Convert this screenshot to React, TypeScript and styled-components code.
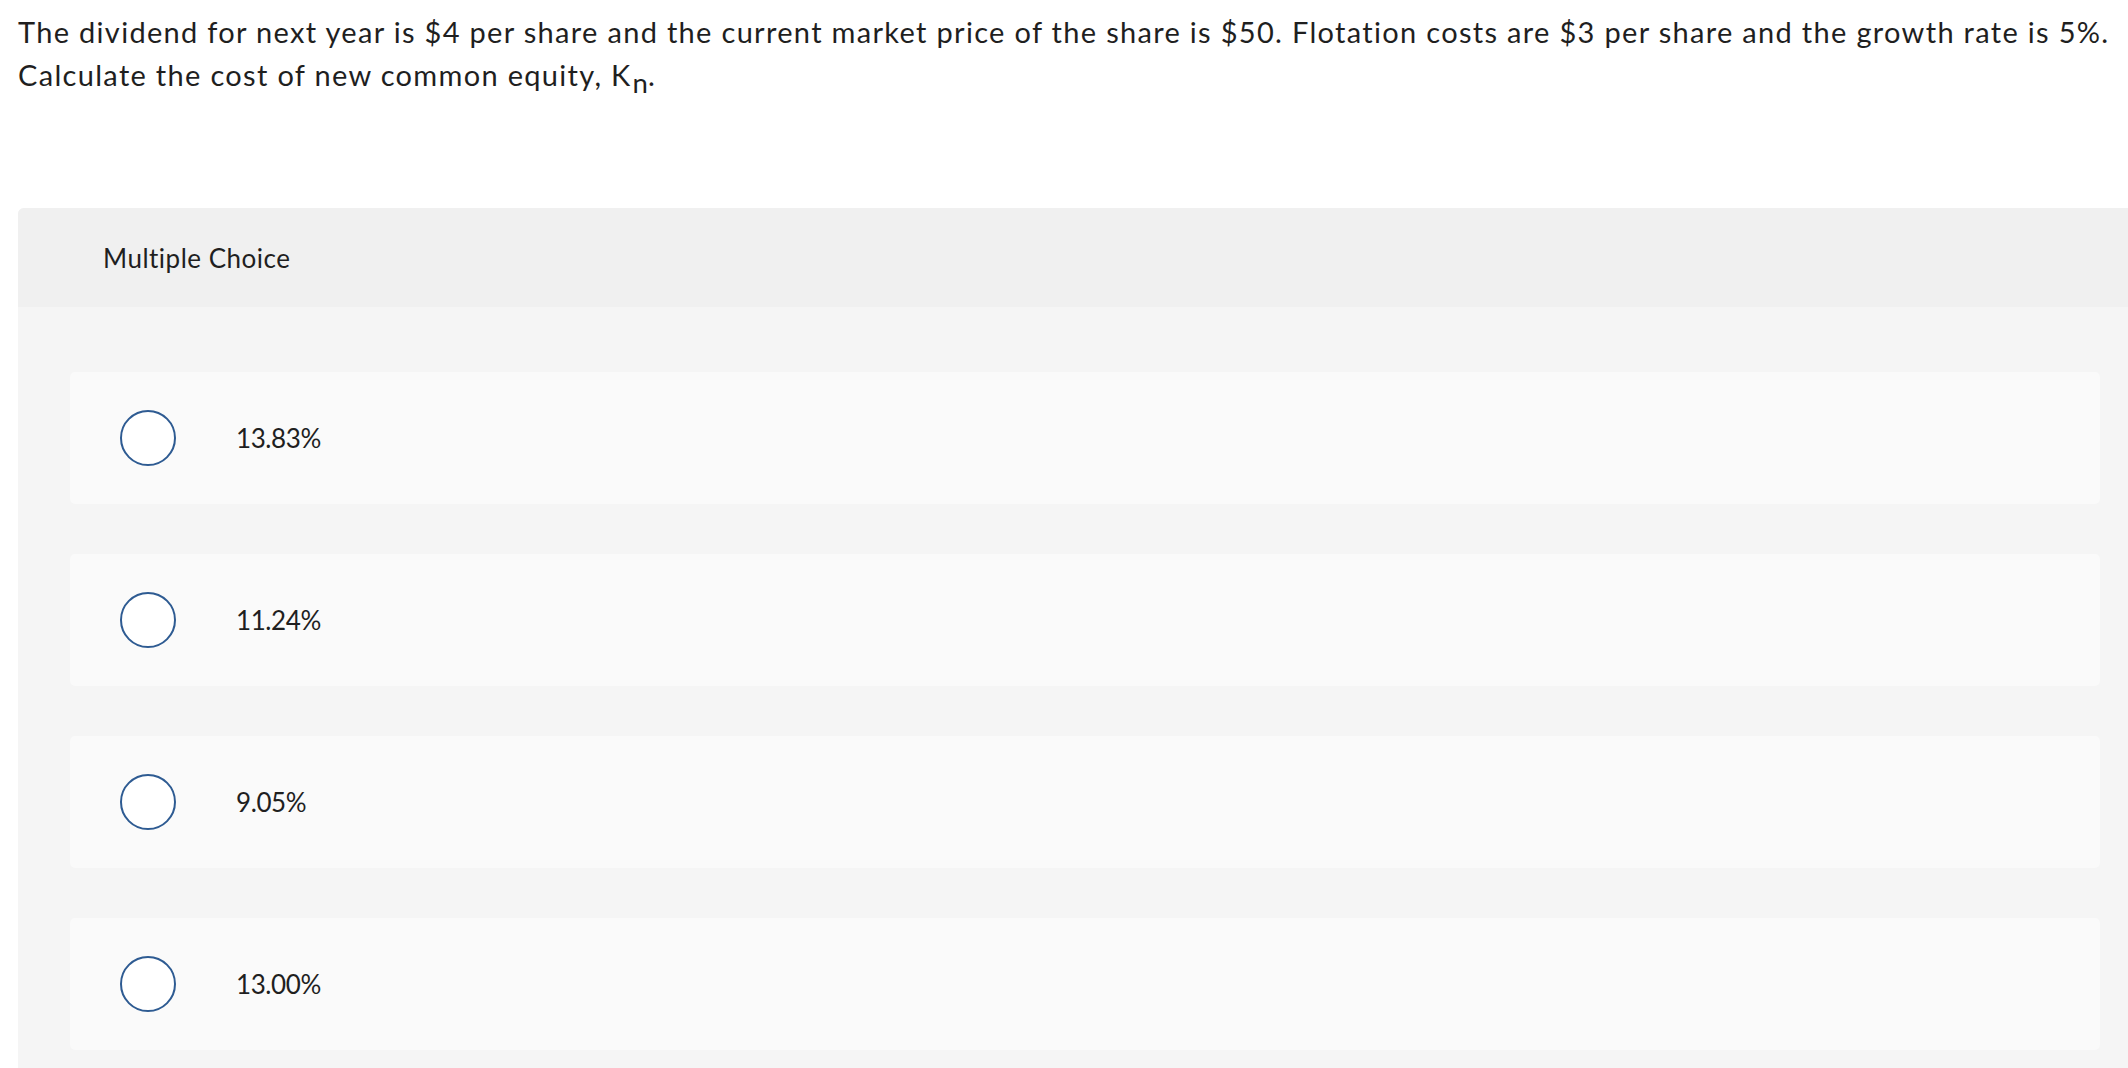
import React from "react";
import styled, { createGlobalStyle } from "styled-components";

const GlobalStyle = createGlobalStyle`
  html, body {
    margin: 0;
    padding: 0;
    background: #ffffff;
    overflow: hidden;
  }
  body {
    font-family: "Lato", "Liberation Sans", sans-serif;
    color: #212121;
  }
`;

const Page = styled.div`
  display: flex;
  flex-direction: column;
  padding-top: 10px;
`;

const Question = styled.p`
  margin: 0 0 112px 0;
  padding: 0 18px;
  font-size: 29px;
  line-height: 43px;
  letter-spacing: 1.31px;
  color: #1f1f1f;
`;

const Sub = styled.sub`
  font-size: 0.95em;
  line-height: 0;
  vertical-align: -7px;
  letter-spacing: 0;
  margin-left: 1px;
`;

const Panel = styled.section`
  margin-left: 18px;
  margin-right: -24px;
  border-radius: 6px 6px 0 0;
  overflow: hidden;
  background: #f5f5f5;
`;

const PanelHeader = styled.header`
  display: flex;
  align-items: center;
  height: 99px;
  padding-left: 85px;
  background: #f0f0f0;
  font-size: 26px;
  letter-spacing: 0.5px;
  color: #1f1f1f;
`;

const ChoiceList = styled.div`
  display: flex;
  flex-direction: column;
  gap: 50px;
  padding: 65px 52px 50px 52px;
`;

const Choice = styled.label`
  display: flex;
  align-items: center;
  height: 132px;
  padding-left: 50px;
  background: #fafafa;
  border-radius: 5px;
  cursor: pointer;
`;

const Radio = styled.span`
  flex: none;
  width: 56px;
  height: 56px;
  box-sizing: border-box;
  border: 2px solid #2e5b92;
  border-radius: 50%;
  background: #ffffff;
`;

const ChoiceText = styled.span`
  margin-left: 60px;
  font-size: 26px;
  letter-spacing: -0.4px;
  color: #1f1f1f;
`;

const choices = ["13.83%", "11.24%", "9.05%", "13.00%"];

export default function App() {
  return (
    <Page>
      <GlobalStyle />
      <Question>
        The dividend for next year is $4 per share and the current market price of the share is $50. Flotation costs are
        $3 per share and the growth rate is 5%.
        <br />
        Calculate the cost of new common equity, K<Sub>n</Sub>.
      </Question>
      <Panel>
        <PanelHeader>Multiple Choice</PanelHeader>
        <ChoiceList>
          {choices.map((c) => (
            <Choice key={c}>
              <Radio />
              <ChoiceText>{c}</ChoiceText>
            </Choice>
          ))}
        </ChoiceList>
      </Panel>
    </Page>
  );
}
